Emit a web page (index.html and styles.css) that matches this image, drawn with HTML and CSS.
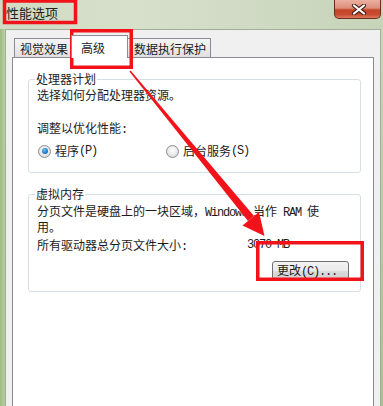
FILE: index.html
```html
<!DOCTYPE html>
<html lang="zh-CN">
<head>
<meta charset="utf-8">
<title>性能选项</title>
<link rel="stylesheet" href="styles.css">
</head>
<body>
<div class="window">
  <div class="titlebar">
    <span class="title">性能选项</span>
    <div class="close">
      <svg width="16" height="11" viewBox="0 0 16 11">
        <path d="M3 1.5 L13 9.5 M13 1.5 L3 9.5" stroke="#4a1f14" stroke-width="4.2" stroke-linecap="round"/>
        <path d="M3 1.5 L13 9.5 M13 1.5 L3 9.5" stroke="#ffffff" stroke-width="2.2" stroke-linecap="round"/>
      </svg>
    </div>
  </div>
  <div class="client">
    <div class="tabs">
      <div class="tab t1">视觉效果</div>
      <div class="tab active">高级</div>
      <div class="tab t3">数据执行保护</div>
    </div>
    <div class="panel">
      <fieldset class="group g1">
        <legend>处理器计划</legend>
        <p class="line l1">选择如何分配处理器资源。</p>
        <p class="line l2">调整以优化性能<span class="lat">:</span></p>
        <div class="radios">
          <label class="radio first"><span class="dot on"></span>程序<span class="lat">(P)</span></label>
          <label class="radio"><span class="dot"></span>后台服务<span class="lat">(S)</span></label>
        </div>
      </fieldset>
      <fieldset class="group g2">
        <legend>虚拟内存</legend>
        <p class="desc">分页文件是硬盘上的一块区域，<span class="lat">Windows </span>当作<span class="lat"> RAM </span>使<br>用。</p>
        <div class="total"><span>所有驱动器总分页文件大小<span class="lat">:</span></span><span class="lat">3070 MB</span></div>
        <div class="actions"><button class="btn" type="button">更改<span class="lat">(C)...</span></button></div>
      </fieldset>
    </div>
  </div>
</div>
<svg class="annot" width="383" height="406" viewBox="0 0 383 406">
  <g fill="none" stroke="#f2121a" stroke-width="3.5">
    <rect x="4.5" y="1" width="71" height="21.5"/>
    <rect x="71.75" y="30.75" width="59.5" height="36.5"/>
    <rect x="257.75" y="242.75" width="104.5" height="36.5"/>
  </g>
  <g fill="#f2121a">
    <polygon points="130.6,70.5 129.4,71.5 248,221 254,216"/>
    <polygon points="264.5,236 242.5,225.5 259,212"/>
  </g>
</svg>
</body>
</html>
```
FILE: styles.css
```css
* { box-sizing: border-box; }

body {
  margin: 0;
  width: 383px;
  height: 406px;
  overflow: hidden;
  position: relative;
  font-family: "Noto Sans CJK SC", "Noto Sans", sans-serif;
  font-size: 12px;
  color: #1c1c1c;
}

.window {
  height: 406px;
  display: flex;
  flex-direction: column;
  background:
    linear-gradient(to right, #9ebb84 0, #b3cc9b 4px, rgba(0,0,0,0) 6px),
    linear-gradient(to bottom, #d3ddc7 0, #cad7bb 30px, #a9bf93 100%);
}

.titlebar {
  height: 29px;
  display: flex;
  align-items: flex-start;
  background: linear-gradient(to right, #d0dbc3 0, #d7e0cb 35%, #d1dbc6 60%, #c7d4b8 100%);
}

.title {
  padding: 5px 0 0 6px;
  font-size: 13px;
  line-height: 16px;
  color: #1e1e1e;
}

.close {
  margin-left: auto;
  margin-right: 2px;
  width: 47px;
  height: 19px;
  border: 1px solid #6a2d20;
  border-top: none;
  border-radius: 0 0 5px 5px;
  background: linear-gradient(to bottom, #eab0a2 0, #dd8d79 45%, #c5432a 55%, #c94a2f 80%, #dc7a5e 100%);
  display: flex;
  align-items: center;
  justify-content: center;
  padding-left: 2px;
}

.client {
  flex: 1;
  margin: 0 2px 0 5px;
  background: #f0f0f0;
  border: 1px solid #a3ae98;
  border-bottom: none;
  padding: 0 6px;
  display: flex;
  flex-direction: column;
}

.tabs {
  height: 28px;
  display: flex;
  align-items: flex-end;
  padding-left: 2px;
}

.tab {
  height: 20px;
  border: 1px solid #898c95;
  border-bottom: none;
  background: linear-gradient(to bottom, #f4f4f4 0, #ebebeb 50%, #dedede 100%);
  line-height: 14px;
  padding-top: 3px;
  white-space: nowrap;
}

.t1 { width: 58px; padding-left: 5px; }
.t3 { width: 84px; padding-left: 6px; margin-left: -1px; }

.tab.active {
  position: relative;
  z-index: 1;
  height: 23px;
  width: 57px;
  margin-left: -1px;
  padding-left: 9px;
  padding-top: 5px;
  background: #ffffff;
}

.panel {
  flex: 1;
  margin-top: -1px;
  background: #ffffff;
  border: 1px solid #898c95;
  border-bottom: none;
  padding: 0 12px 0 15px;
}

.group {
  margin: 14px 0 0 0;
  padding: 0 8px;
  border: 1px solid #d5dfe5;
  border-radius: 3px;
  min-inline-size: 0;
}

.group legend {
  margin-left: -2px;
  padding: 0 1px;
  line-height: 14px;
}

.line {
  margin: 0;
  line-height: 14px;
}

.l1 { margin-top: 2px; }
.l2 { margin-top: 19px; }

.radios {
  margin-top: 7px;
  height: 14px;
  display: flex;
}

.g1 { padding-bottom: 14px; }

.radio {
  display: flex;
  align-items: center;
  line-height: 14px;
}

.radio.first { width: 128px; }

.dot {
  width: 13px;
  height: 13px;
  margin: 0 4px 0 1px;
  border-radius: 50%;
  border: 1px solid #8c8f94;
  background: radial-gradient(circle at 50% 40%, #ffffff 0, #ececec 45%, #cfcfcf 100%);
  display: flex;
  align-items: center;
  justify-content: center;
}

.dot.on::after {
  content: "";
  width: 6px;
  height: 6px;
  border-radius: 50%;
  background: radial-gradient(circle at 40% 35%, #6fc2f5 0, #1e7fd0 55%, #0d4f94 100%);
}

.lat {
  font-family: "Liberation Mono", monospace;
  letter-spacing: -1.2px;
}

.desc {
  margin: 3px 0 0 0;
  line-height: 13px;
}

.total {
  margin-top: 5px;
  line-height: 14px;
  display: grid;
  grid-template-columns: 210px auto;
}

.actions {
  margin-top: 7px;
  display: flex;
  justify-content: flex-end;
}

.g2 { padding-bottom: 11px; }

.btn {
  width: 77px;
  height: 19px;
  margin: 0 3px 0 0;
  padding: 0 0 0 4px;
  text-align: left;
  border: 1px solid #707070;
  border-radius: 3px;
  background: linear-gradient(to bottom, #f3f3f3 0, #ebebeb 50%, #dddddd 50%, #cfcfcf 100%);
  font-family: "Noto Sans CJK SC", "Noto Sans", sans-serif;
  font-size: 12px;
  line-height: 14px;
  color: #1c1c1c;
}

.annot {
  position: absolute;
  top: 0;
  left: 0;
  pointer-events: none;
}
```
